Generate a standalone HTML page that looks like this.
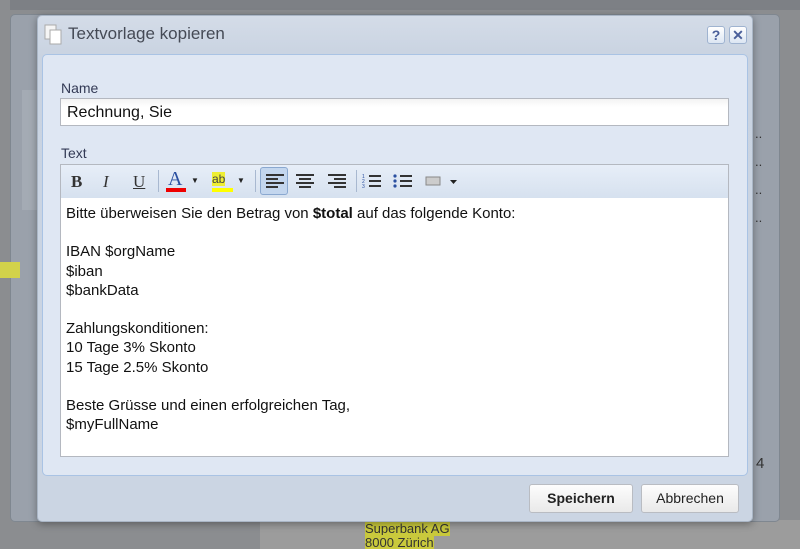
<!DOCTYPE html>
<html><head><meta charset="utf-8"><style>
*{box-sizing:border-box;margin:0;padding:0}
html,body{width:800px;height:549px;overflow:hidden}
body{background:#8b8d90;font-family:"Liberation Sans",sans-serif;position:relative}
.abs{position:absolute}
.back{left:10px;top:14px;width:770px;height:508px;background:#9aa1ab;border:1px solid #7f8790;border-radius:5px}
.dlg{left:37px;top:15px;width:716px;height:507px;background:linear-gradient(#d4dce8,#c9d3e1 40px,#cbd5e3);border:1px solid #aab6c6;border-radius:5px;box-shadow:0 2px 8px rgba(0,0,0,.35)}
.title{left:68px;top:24px;font-size:17px;color:#454a55}
.panel{left:42px;top:54px;width:706px;height:422px;background:#dfe7f3;border:1px solid #a9c3e4;border-radius:5px}
.lbl{font-size:14px;color:#333a55}
.inp{left:60px;top:98px;width:669px;height:28px;background:linear-gradient(#f3f3f3,#fff 8px);border:1px solid #b4b8c0;font-size:16px;padding:5px 6px;color:#111}
.tb{left:60px;top:164px;width:669px;height:35px;background:linear-gradient(#e7eef8,#d6e1ef);border:1px solid #b4b8c0;border-bottom:1px solid #8fb2e0}
.ed{left:60px;top:198px;width:669px;height:259px;background:#fff;border:1px solid #b4b8c0;border-top:none;font-size:15px;line-height:19.2px;padding:6px 5px;color:#111}
.btn{top:484px;height:29px;background:linear-gradient(#fdfdfd,#e9e9e9);border:1px solid #b9bcc2;border-radius:3px;font-size:14px;text-align:center;line-height:27px;color:#222}
.tbi{position:absolute;top:172px;font-family:"Liberation Serif",serif;font-size:17px;color:#333}
.hb{top:26px;width:18px;height:18px;border:1px solid #9fb3d0;border-radius:3px;background:linear-gradient(#fff,#dce6f3);color:#4a5f9a;font-weight:bold;text-align:center;line-height:16px;font-size:14px}
</style></head><body>
<div class="abs" style="left:10px;top:0;width:790px;height:10px;background:#7d8085"></div>
<div class="abs" style="left:260px;top:520px;width:540px;height:29px;background:#9c9c9c"></div>
<div class="abs" style="left:365px;top:522px;white-space:nowrap;font-size:13px;line-height:14px;color:#333"><span style="background:#c9c93c">Superbank AG</span><br><span style="background:#c9c93c">8000 Zürich</span></div>
<div class="abs back"></div>
<div class="abs" style="left:22px;top:90px;width:16px;height:120px;background:#a4abb4"></div>
<div class="abs" style="left:0;top:262px;width:20px;height:16px;background:#d2d24a"></div>
<div class="abs" style="left:755px;top:120px;font-size:13px;color:#333;line-height:28px">..<br>..<br>..<br>..</div>
<div class="abs" style="left:756px;top:455px;font-size:15px;color:#333">4</div>
<div class="abs dlg"></div>
<svg class="abs" style="left:44px;top:24px" width="20" height="22"><rect x="1" y="1" width="11" height="14" fill="#f5f5f5" stroke="#aaa"/><rect x="6" y="6" width="11" height="14" fill="#fff" stroke="#aaa"/></svg>
<div class="abs title">Textvorlage kopieren</div>
<div class="abs hb" style="left:707px">?</div>
<div class="abs hb" style="left:729px">✕</div>
<div class="abs panel"></div>
<div class="abs lbl" style="left:61px;top:80px">Name</div>
<div class="abs inp">Rechnung, Sie</div>
<div class="abs lbl" style="left:61px;top:145px">Text</div>
<div class="abs tb"></div>
<div class="tbi" style="left:71px;font-weight:bold">B</div>
<div class="tbi" style="left:103px;font-style:italic">I</div>
<div class="tbi" style="left:133px;text-decoration:underline">U</div>
<div class="abs" style="left:158px;top:170px;width:1px;height:22px;background:#a8b8d0"></div>
<div class="tbi" style="left:168px;top:168px;color:#2a4fa0;font-size:20px">A</div>
<div class="abs" style="left:166px;top:188px;width:20px;height:4px;background:#e00"></div>
<div class="abs" style="left:191px;top:176px;font-size:8px;color:#222">▼</div>
<div class="abs" style="left:212px;top:172px;font-size:12px;background:#ee3;color:#444">ab</div>
<div class="abs" style="left:212px;top:188px;width:21px;height:4px;background:#ff0"></div>
<div class="abs" style="left:237px;top:176px;font-size:8px;color:#222">▼</div>
<div class="abs" style="left:255px;top:170px;width:1px;height:22px;background:#a8b8d0"></div>
<div class="abs" style="left:260px;top:167px;width:28px;height:28px;border:1px solid #8aa8d0;border-radius:3px;background:#c3d6ee"></div>
<svg class="abs" style="left:264px;top:173px" width="90" height="16" stroke="#333" stroke-width="2"><path d="M2 2h18M2 6h12M2 10h18M2 14h12"/><path d="M32 2h18M35 6h12M32 10h18M35 14h12"/><path d="M64 2h18M70 6h12M64 10h18M70 14h12"/></svg>
<div class="abs" style="left:356px;top:170px;width:1px;height:22px;background:#a8b8d0"></div>
<svg class="abs" style="left:362px;top:173px" width="100" height="16"><g stroke="#333" stroke-width="2"><path d="M7 3h12M7 8h12M7 13h12M38 3h12M38 8h12M38 13h12"/></g><g fill="#2a4fa0" font-size="5"><text x="0" y="5">1</text><text x="0" y="10">2</text><text x="0" y="15">3</text></g><g fill="#2a4fa0"><circle cx="33" cy="3" r="1.6"/><circle cx="33" cy="8" r="1.6"/><circle cx="33" cy="13" r="1.6"/></g><rect x="64" y="4" width="14" height="8" fill="#ccc" stroke="#888"/><path d="M88 7h7l-3.5 4z" fill="#222"/></svg>
<div class="abs ed"><div>Bitte überweisen Sie den Betrag von <b>$total</b> auf das folgende Konto:</div><br><div>IBAN $orgName</div><div>$iban</div><div>$bankData</div><br><div>Zahlungskonditionen:</div><div>10 Tage 3% Skonto</div><div>15 Tage 2.5% Skonto</div><br><div>Beste Grüsse und einen erfolgreichen Tag,</div><div>$myFullName</div></div>
<div class="abs btn" style="left:529px;width:104px;font-weight:bold">Speichern</div>
<div class="abs btn" style="left:641px;width:98px">Abbrechen</div>
</body></html>
